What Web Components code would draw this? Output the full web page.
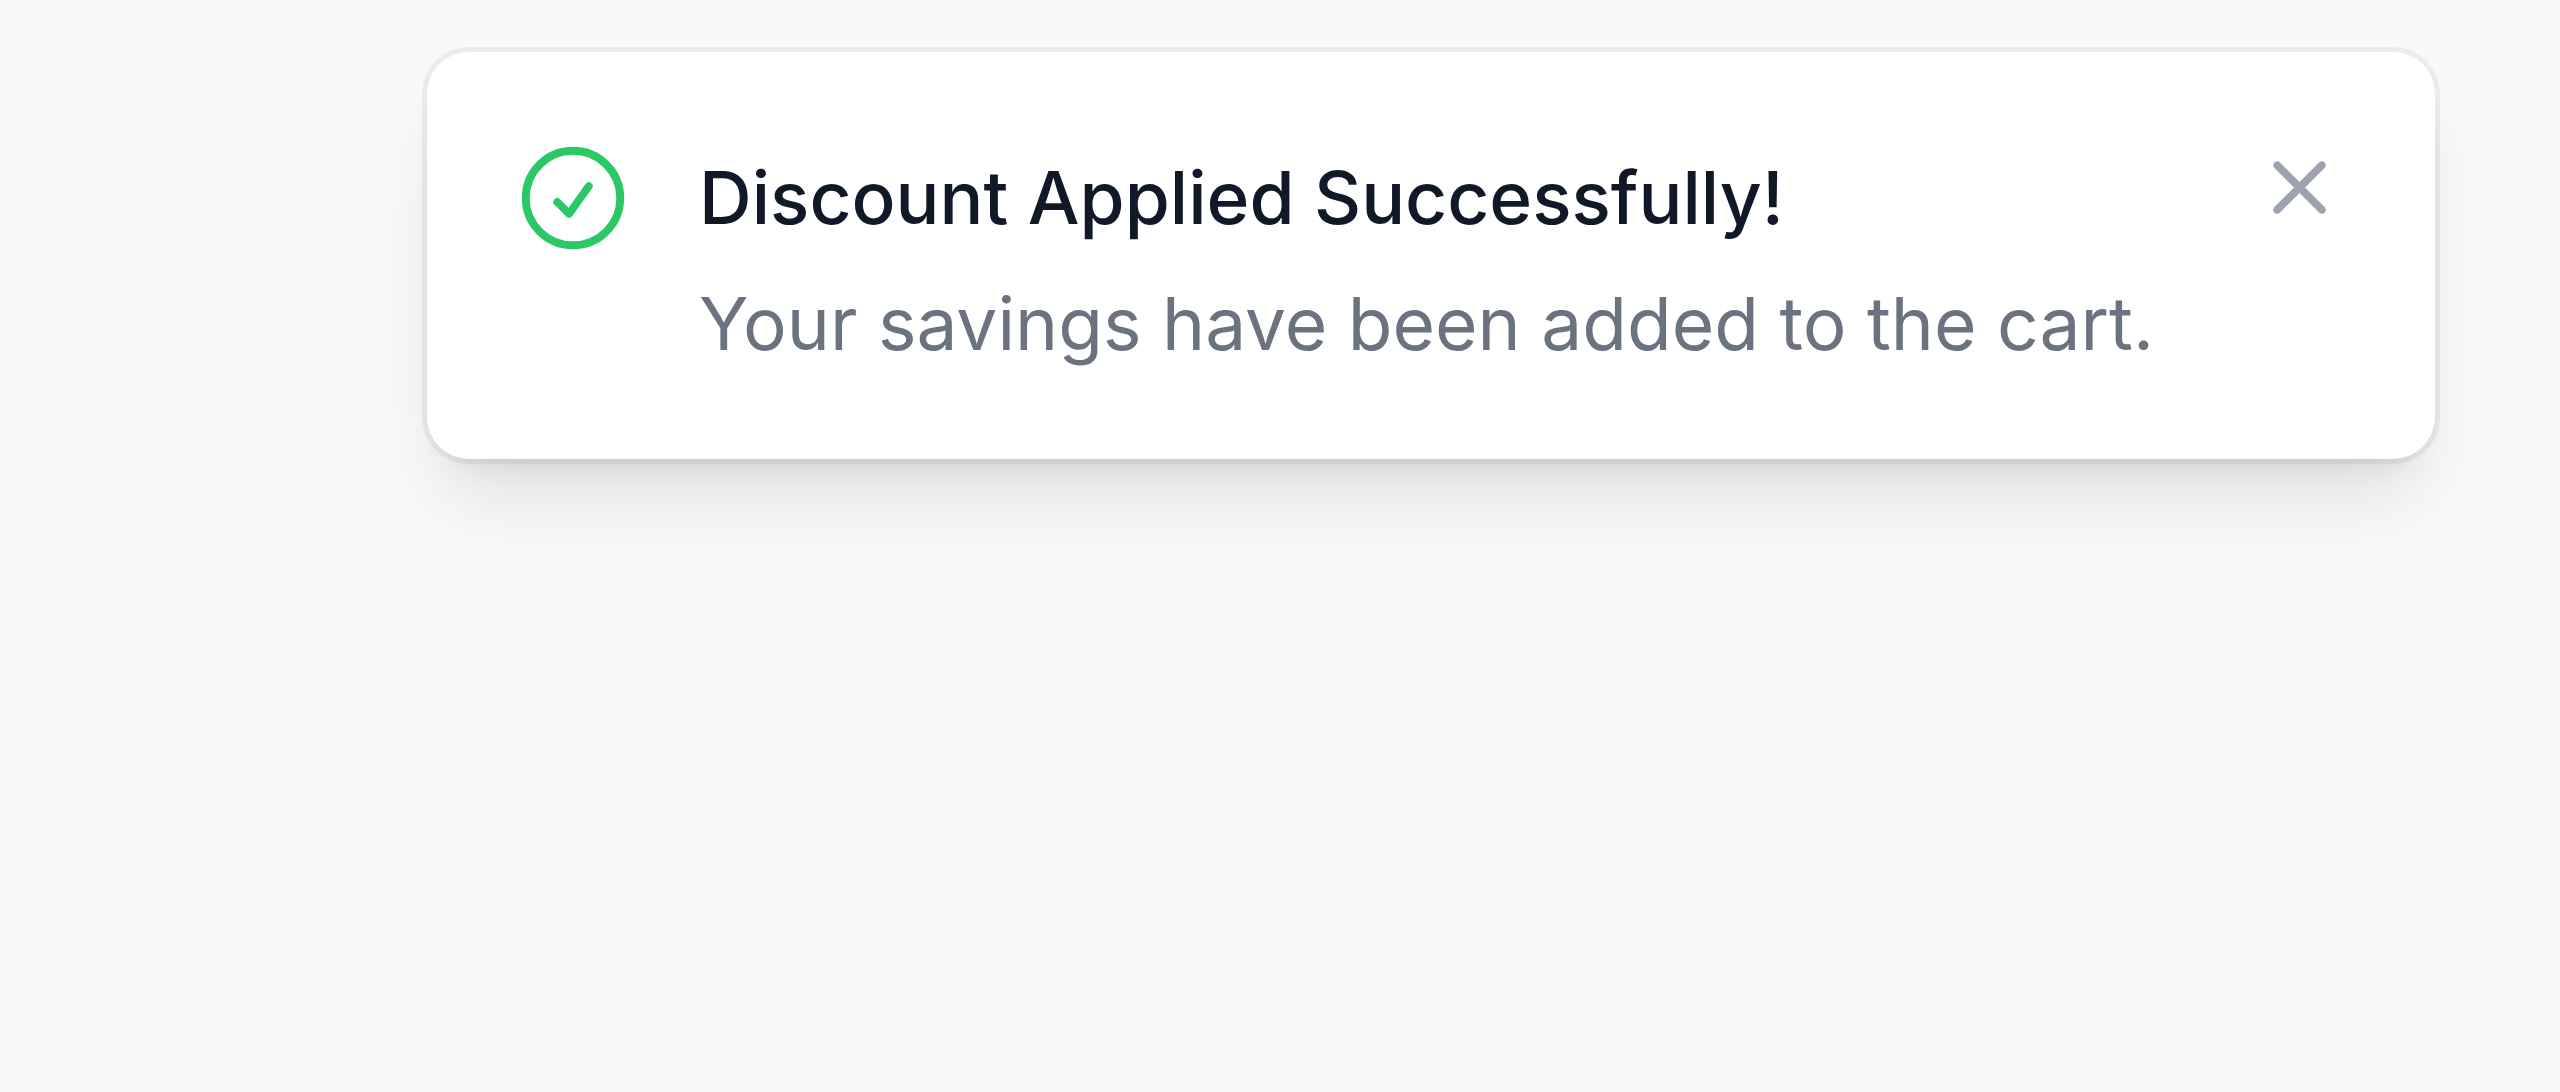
<!DOCTYPE html>
<html lang="en">
<head>
<meta charset="utf-8">
<meta name="viewport" content="width=device-width, initial-scale=1">
<title>Notification</title>
<style>
  body { margin: 0; background: #f9f9f9; font-family: Inter, "Liberation Sans", sans-serif; }
</style>
</head>
<body>
<notification-region>
  <toast-card>
    <check-icon slot="icon"></check-icon>
    <span slot="title">Discount Applied Successfully!</span>
    <span slot="message">Your savings have been added to the cart.</span>
  </toast-card>
</notification-region>

<template id="region-template">
  <style>
    :host { display: flex; flex-direction: column; align-items: flex-end; min-height: 100vh; box-sizing: border-box; padding: 52px 125px; }
  </style>
  <slot></slot>
</template>

<template id="check-template">
  <style>
    :host { display: block; width: 126px; height: 126px; color: #2bc866; }
    svg { display: block; width: 100%; height: 100%; }
  </style>
  <svg viewBox="0 0 24 24" fill="none" stroke="currentColor" stroke-width="1.5" stroke-linecap="round" stroke-linejoin="round" aria-hidden="true">
    <path d="M9 12.75L11.25 15 15 9.75M21 12a9 9 0 11-18 0 9 9 0 0118 0z"/>
  </svg>
</template>

<template id="close-template">
  <style>
    :host { display: block; }
    button { display: block; padding: 0; border: 0; border-radius: 31px; background: transparent; color: #9ca3af; cursor: pointer; }
    button:hover { color: #6b7280; }
    svg { display: block; width: 105px; height: 105px; }
  </style>
  <button type="button" aria-label="Close">
    <svg viewBox="0 0 20 20" fill="currentColor" aria-hidden="true">
      <path d="M6.28 5.22a.75.75 0 00-1.06 1.06L8.94 10l-3.72 3.72a.75.75 0 101.06 1.06L10 11.06l3.72 3.72a.75.75 0 101.06-1.06L11.06 10l3.72-3.72a.75.75 0 00-1.06-1.06L10 8.94 6.28 5.22z"/>
    </svg>
  </button>
</template>

<template id="toast-template">
  <style>
    :host {
      display: block; box-sizing: border-box; width: 100%; max-width: 2008px; padding: 83px;
      background: #fff; border-radius: 42px;
      box-shadow: 0 0 0 5px rgba(0,0,0,.05), 0 52px 78px -16px rgba(0,0,0,.1), 0 21px 31px -21px rgba(0,0,0,.1);
    }
    .row { display: flex; align-items: flex-start; }
    .icon, close-button { flex: none; }
    .text { flex: 1; min-width: 0; margin-left: 63px; padding-top: 10px; font-size: 73px; line-height: 105px; font-optical-sizing: none; }
    p { margin: 0; }
    .title { font-weight: 500; color: #111827; }
    .message { margin-top: 21px; color: #6b7280; }
    close-button { margin-left: 84px; }
  </style>
  <div class="row" role="status">
    <div class="icon"><slot name="icon"></slot></div>
    <div class="text">
      <p class="title"><slot name="title"></slot></p>
      <p class="message"><slot name="message"></slot></p>
    </div>
    <close-button></close-button>
  </div>
</template>

<script>
  class TemplateElement extends HTMLElement {
    constructor() {
      super();
      const template = document.getElementById(this.constructor.template);
      this.attachShadow({ mode: "open" }).append(template.content.cloneNode(true));
    }
  }
  class NotificationRegion extends TemplateElement { static template = "region-template"; }
  class CheckIcon extends TemplateElement { static template = "check-template"; }
  class CloseButton extends TemplateElement {
    static template = "close-template";
    connectedCallback() {
      this.shadowRoot.querySelector("button").addEventListener("click", () =>
        this.dispatchEvent(new CustomEvent("dismiss", { bubbles: true, composed: true })));
    }
  }
  class ToastCard extends TemplateElement {
    static template = "toast-template";
    connectedCallback() { this.addEventListener("dismiss", () => this.remove()); }
  }
  customElements.define("close-button", CloseButton);
  customElements.define("check-icon", CheckIcon);
  customElements.define("toast-card", ToastCard);
  customElements.define("notification-region", NotificationRegion);
</script>
</body>
</html>
